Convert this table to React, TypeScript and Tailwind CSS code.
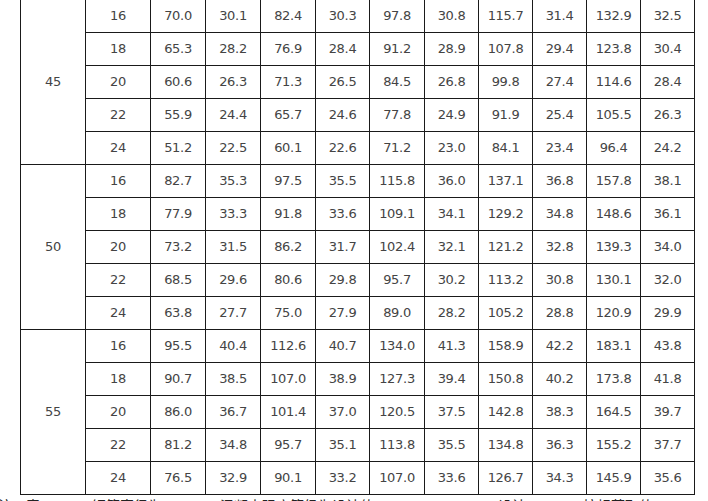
const groups = [
  {
    size: "45",
    rows: [
      ["16", "70.0", "30.1", "82.4", "30.3", "97.8", "30.8", "115.7", "31.4", "132.9", "32.5"],
      ["18", "65.3", "28.2", "76.9", "28.4", "91.2", "28.9", "107.8", "29.4", "123.8", "30.4"],
      ["20", "60.6", "26.3", "71.3", "26.5", "84.5", "26.8", "99.8", "27.4", "114.6", "28.4"],
      ["22", "55.9", "24.4", "65.7", "24.6", "77.8", "24.9", "91.9", "25.4", "105.5", "26.3"],
      ["24", "51.2", "22.5", "60.1", "22.6", "71.2", "23.0", "84.1", "23.4", "96.4", "24.2"],
    ],
  },
  {
    size: "50",
    rows: [
      ["16", "82.7", "35.3", "97.5", "35.5", "115.8", "36.0", "137.1", "36.8", "157.8", "38.1"],
      ["18", "77.9", "33.3", "91.8", "33.6", "109.1", "34.1", "129.2", "34.8", "148.6", "36.1"],
      ["20", "73.2", "31.5", "86.2", "31.7", "102.4", "32.1", "121.2", "32.8", "139.3", "34.0"],
      ["22", "68.5", "29.6", "80.6", "29.8", "95.7", "30.2", "113.2", "30.8", "130.1", "32.0"],
      ["24", "63.8", "27.7", "75.0", "27.9", "89.0", "28.2", "105.2", "28.8", "120.9", "29.9"],
    ],
  },
  {
    size: "55",
    rows: [
      ["16", "95.5", "40.4", "112.6", "40.7", "134.0", "41.3", "158.9", "42.2", "183.1", "43.8"],
      ["18", "90.7", "38.5", "107.0", "38.9", "127.3", "39.4", "150.8", "40.2", "173.8", "41.8"],
      ["20", "86.0", "36.7", "101.4", "37.0", "120.5", "37.5", "142.8", "38.3", "164.5", "39.7"],
      ["22", "81.2", "34.8", "95.7", "35.1", "113.8", "35.5", "134.8", "36.3", "155.2", "37.7"],
      ["24", "76.5", "32.9", "90.1", "33.2", "107.0", "33.6", "126.7", "34.3", "145.9", "35.6"],
    ],
  },
];

const cell = "flex items-center justify-center border-r border-b border-[#1a1a1a] h-[33px]";

export default function App() {
  return (
    <div
      className="w-[708px] h-[501px] overflow-hidden bg-white text-[#444] text-[13px] tracking-[-0.3px]"
      style={{ fontFamily: '"DejaVu Sans", Verdana, "Noto Sans CJK SC", sans-serif' }}
    >
      <div className="ml-[20px] -mt-px grid w-max grid-cols-[65px_65px_55px_55px_55px_54px_55px_54px_54px_54px_54px_54px] border-l border-t border-[#1a1a1a]">
        {groups.map((g) => (
          <div key={g.size} className="contents">
            <div className={`${cell} row-span-5 h-auto`}>{g.size}</div>
            {g.rows.map((r, i) => (
              <div key={i} className="contents">
                {r.map((v, j) => (
                  <div key={j} className={cell}>
                    {v}
                  </div>
                ))}
              </div>
            ))}
          </div>
        ))}
      </div>

      {/* footnote, cut off by the bottom edge as in the scan */}
      <div
        className="mt-[2px] flex text-[14px] leading-[16px] tracking-normal text-[#222]"
        style={{ fontFamily: '"Noto Sans CJK SC", sans-serif' }}
      >
        <span className="-ml-[2px]">注：表</span>
        <span className="ml-[52px]">钢筋直径为</span>
        <span className="ml-[58px]">混凝土强度等级为设计值</span>
        <span className="ml-[124px]">设计</span>
        <span className="ml-[57px]">按规范取值</span>
      </div>
    </div>
  );
}
